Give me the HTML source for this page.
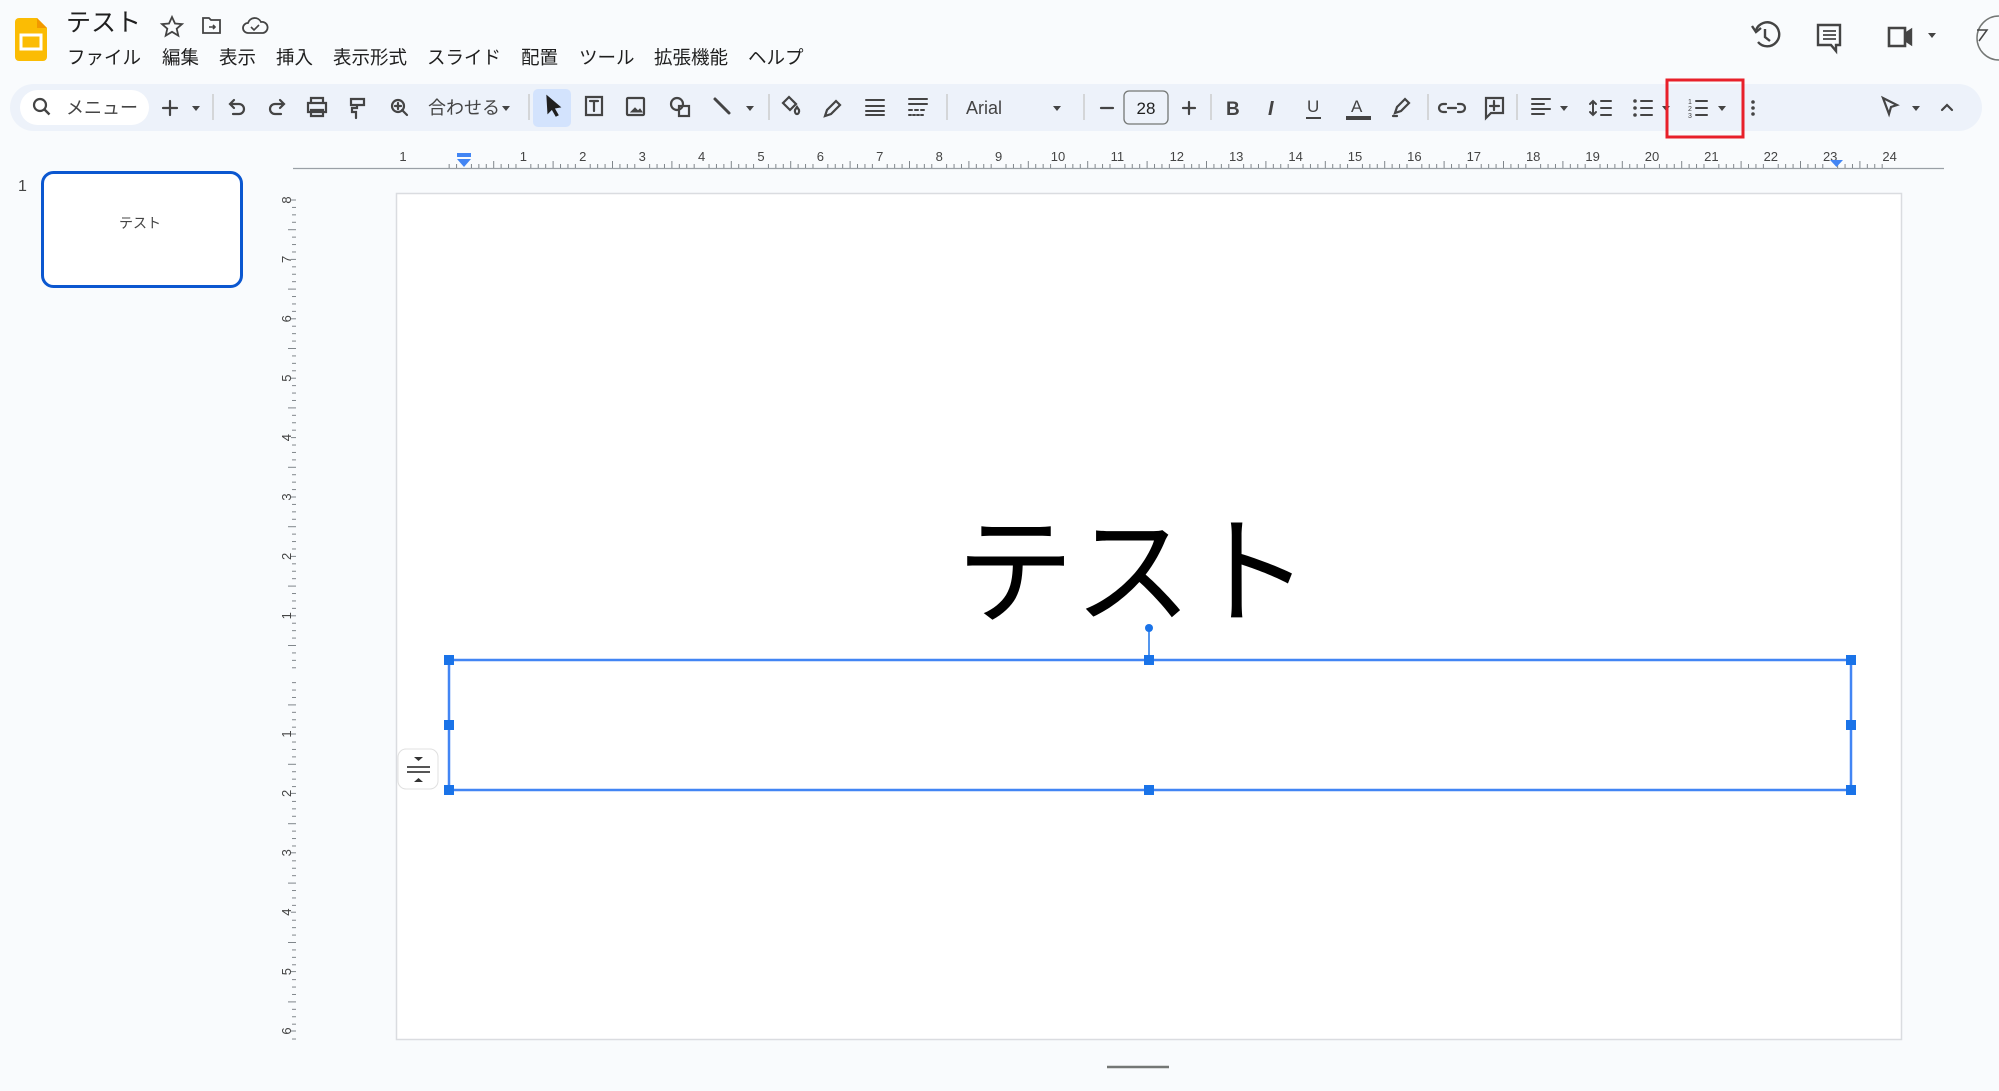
<!DOCTYPE html>
<html><head><meta charset="utf-8"><style>
html,body{margin:0;padding:0;width:1999px;height:1091px;overflow:hidden;background:#f9fbfd;}
svg{display:block;}
text{font-family:"Liberation Sans","Noto Sans CJK JP",sans-serif;}
.jp{font-family:"Liberation Sans","Noto Sans CJK JP",sans-serif;}
</style></head><body>
<svg id="s" width="1999" height="1091" viewBox="0 0 1999 1091" xmlns="http://www.w3.org/2000/svg">
<rect width="1999" height="1091" fill="#f9fbfd"/>
<!-- logo -->
<path d="M15 22 a4 4 0 0 1 4-4 h18 l10 10 v29 a4 4 0 0 1 -4 4 h-24 a4 4 0 0 1 -4-4z" fill="#fbbc04"/>
<path d="M37 18 v10 h10z" fill="#f29900"/>
<rect x="21" y="35" width="20" height="14" fill="none" stroke="#fff" stroke-width="3"/>
<text x="66" y="31" font-size="25" fill="#1f1f1f" class="jp">テスト</text>
<!-- star folder cloud -->
<path d="M172 17 l3 6.5 7 .6 -5.3 4.6 1.6 6.9 -6.3-3.8 -6.3 3.8 1.6-6.9 -5.3-4.6 7-.6z" fill="none" stroke="#444" stroke-width="1.8"/>
<path d="M203 18 h6 l2 2 h9 v13 h-17z" fill="none" stroke="#444" stroke-width="1.8"/><path d="M209 27 h6 m-2-2 l2 2 -2 2" stroke="#444" stroke-width="1.6" fill="none"/>
<path d="M248 33 a5 5 0 0 1 0-10 a7 7 0 0 1 13-1 a5 5 0 0 1 2 11z" fill="none" stroke="#444" stroke-width="1.8"/><path d="M251 27 l3 3 5-5" stroke="#444" stroke-width="1.6" fill="none"/>
<g font-size="18.5" fill="#1f1f1f" class="jp">
<text x="67" y="64">ファイル</text><text x="162" y="64">編集</text><text x="219" y="64">表示</text><text x="276" y="64">挿入</text><text x="333" y="64">表示形式</text><text x="427" y="64">スライド</text><text x="521" y="64">配置</text><text x="579" y="64">ツール</text><text x="654" y="64">拡張機能</text><text x="748" y="64">ヘルプ</text>
</g>
<!-- right icons -->
<g stroke="#444" stroke-width="2.4" fill="none">
<path d="M1756 30 a12 12 0 1 1 2 12"/><path d="M1752 26 l4 6 5-4"/><path d="M1765 29 v8 l5 4"/>
<path d="M1818 25 h22 v20 h-4 v6 l-5-6 h-13z"/><path d="M1823 31 h13 M1823 35 h13 M1823 39 h13" stroke-width="1.8"/>
<path d="M1889 28 h16 v18 h-16z" stroke-width="2.6"/><path d="M1905 34 l6-4 v14 l-6-4" fill="#444"/>
</g>
<path d="M1928 33 h8 l-4 5z" fill="#444"/>
<path d="M1999 16 a22 22 0 0 0 0 44" fill="none" stroke="#747775" stroke-width="1.5"/>
<path d="M1977 30 h10 l-8 11" stroke="#444" stroke-width="1.5" fill="none"/>
<!-- toolbar -->
<rect x="10" y="84" width="1972" height="47" rx="23.5" fill="#edf2fa"/>
<rect x="20" y="90" width="129" height="35" rx="17.5" fill="#fff"/>
<circle cx="40" cy="105" r="6" fill="none" stroke="#444" stroke-width="2.2"/><path d="M44.5 109.5 l5 5" stroke="#444" stroke-width="2.4"/>
<text x="66" y="114" font-size="18" fill="#444" class="jp">メニュー</text>
<rect x="533" y="89" width="38" height="38" rx="5" fill="#d3e3fd"/>
<g fill="#444" stroke="none">
<path d="M192 106 h8 l-4 5z M1053 106 h8 l-4 5z M746 106 h8 l-4 5z M502 106 h8 l-4 5z M1560 106 h8 l-4 5z M1662 106 h8 l-4 5z M1718 106 h8 l-4 5z M1912 106 h8 l-4 5z"/>
<circle cx="1753" cy="102" r="1.8"/><circle cx="1753" cy="108" r="1.8"/><circle cx="1753" cy="114" r="1.8"/>
</g>
<g stroke="#444" stroke-width="2.2" fill="none" stroke-linecap="round">
<path d="M163 108 h14 M170 101 v14"/>
<path d="M231 104 h8 a5 5 0 0 1 0 10 h-6 M234 100 l-4 4 4 4"/>
<path d="M283 104 h-8 a5 5 0 0 0 0 10 h6 M280 100 l4 4-4 4"/>
<path d="M311 102 v-4 h12 v4 M308 103 h18 v9 h-18z M311 110 h12 v6 h-12z"/>
<path d="M351 99 h13 v6 h-13z M357 105 v3 h-5 v4 h4 v6"/>
<circle cx="398" cy="106" r="6"/><path d="M402 110 l5 5 M398 103 v6 M395 106 h6"/>
<path d="M547 96 l13 11 -6 1 4 7 -2 1 -4-7 -4 4z" fill="#1f1f1f" stroke="#1f1f1f" stroke-width="1.2"/>
<path d="M586 97 h16 v18 h-16z"/><path d="M590 101 h8 M594 101 v10"/>
<rect x="627" y="98" width="17" height="17" rx="1"/><path d="M631 112 l4-4 3 3 2-2 2 3z" fill="#444" stroke-width="1"/>
<circle cx="677" cy="104" r="6"/><rect x="679" y="106" width="10" height="10"/>
<path d="M715 99 l14 14" stroke-width="3"/>
<path d="M783 103 l6-6 7 7 -6 6z M795 110 a2 3 0 0 0 2 4 a2 3 0 0 0 2-4 l-2-3z"/>
<path d="M825 116 l2-6 9-9 4 4 -9 9z"/>
<path d="M866 100 h18 M866 106 h18 M866 111 h18 M866 115 h18" stroke-width="2"/>
<path d="M909 99 h18 M909 104 h18 M909 110 h3 M915 110 h3 M921 110 h3 M909 115 h2 M913 115 h2 M917 115 h2 M921 115 h2" stroke-width="2"/>
<path d="M1101 108 h12 M1183 108 h12 M1189 102 v12"/>
</g>
<g font-size="18" fill="#444"><text x="428" y="114" class="jp">合わせる</text><text x="966" y="114">Arial</text></g>
<g stroke="#c7c7c7" stroke-width="1.3"><path d="M213 94 v26 M529 94 v26 M769 94 v26 M947 94 v26 M1084 94 v26 M1211 94 v26 M1428 94 v26 M1517 94 v26"/></g>
<rect x="1124" y="91" width="44" height="33" rx="5" fill="none" stroke="#747775" stroke-width="1.3"/>
<text x="1146" y="114" font-size="17" fill="#1f1f1f" text-anchor="middle">28</text>
<g fill="#444" font-size="19" font-weight="bold"><text x="1226" y="115">B</text></g>
<text x="1268" y="115" font-size="20" font-style="italic" font-family="Liberation Serif" fill="#444" font-weight="bold">I</text>
<text x="1307" y="112" font-size="17" fill="#444">U</text><path d="M1306 118 h15" stroke="#444" stroke-width="2"/>
<text x="1351" y="112" font-size="17" fill="#444">A</text><rect x="1346" y="116" width="25" height="4" fill="#444"/>
<g stroke="#444" stroke-width="2.2" fill="none" stroke-linecap="round">
<path d="M1395 113 l2-6 8-8 4 4 -8 8z M1393 116 h4"/>
<path d="M1446 104 h-3 a4 4 0 0 0 0 8 h3 M1458 104 h3 a4 4 0 0 1 0 8 h-3 M1448 108 h8"/>
<path d="M1486 98 h17 v15 h-12 l-5 5z M1494 101 v9 M1490 106 h9"/>
<path d="M1532 99 h18 M1532 104 h12 M1532 109 h18 M1532 114 h12" stroke-width="2"/>
<path d="M1593 101 v14 M1590 104 l3-3 3 3 M1590 112 l3 3 3-3 M1601 101 h10 M1601 108 h10 M1601 115 h10" stroke-width="2"/>
<path d="M1641 101 h11 M1641 108 h11 M1641 115 h11" stroke-width="2"/>
<path d="M1696 101 h11 M1696 108 h11 M1696 115 h11" stroke-width="2"/>
<path d="M1883 98 l14 7 -6 2 -2 7z"/>
<path d="M1942 110 l5-5 5 5"/>
</g>
<g fill="#444"><circle cx="1635" cy="101" r="1.8"/><circle cx="1635" cy="108" r="1.8"/><circle cx="1635" cy="115" r="1.8"/></g>
<text x="1688" y="104" font-size="7" fill="#444">1</text><text x="1688" y="111" font-size="7" fill="#444">2</text><text x="1688" y="118" font-size="7" fill="#444">3</text>
<rect x="1667" y="80" width="76" height="57" fill="none" stroke="#e8202a" stroke-width="3"/>
<!-- horizontal ruler -->
<path d="M293 168.5 H1944" stroke="#9aa0a6" stroke-width="1.2"/>
<g id="hr" stroke="#80868b" stroke-width="1"></g>
<g id="hrt" font-size="13" fill="#444" text-anchor="middle"></g>
<path d="M457 153 h14 v4 h-14z" fill="#4285f4"/><path d="M457 159 h14 l-7 8z" fill="#4285f4"/>
<path d="M1830 160 h13 l-6.5 7z" fill="#4285f4"/>
<!-- vertical ruler -->
<g id="vr" stroke="#80868b" stroke-width="1"></g>
<g id="vrt" font-size="13" fill="#444" text-anchor="middle"></g>
<!-- thumbnail -->
<text x="18" y="191" font-size="16" fill="#444">1</text>
<rect x="42.5" y="172.5" width="199" height="114" rx="11" fill="#fff" stroke="#0b57d0" stroke-width="3"/>
<text x="140" y="228" font-size="14" fill="#444" text-anchor="middle" class="jp">テスト</text>
<!-- slide -->
<rect x="396.5" y="193.5" width="1505" height="846" fill="#fff" stroke="#dadce0" stroke-width="1.5"/>
<text x="1133" y="614" font-size="118" fill="#000" text-anchor="middle" class="jp">テスト</text>
<rect x="449" y="660" width="1402" height="130" fill="none" stroke="#4285f4" stroke-width="2.5"/>
<path d="M1149 628 v32" stroke="#1a73e8" stroke-width="1.5"/><circle cx="1149" cy="628" r="4" fill="#1a73e8"/>
<g fill="#1a73e8">
<rect x="444" y="655" width="10" height="10"/><rect x="1144" y="655" width="10" height="10"/><rect x="1846" y="655" width="10" height="10"/>
<rect x="444" y="720" width="10" height="10"/><rect x="1846" y="720" width="10" height="10"/>
<rect x="444" y="785" width="10" height="10"/><rect x="1144" y="785" width="10" height="10"/><rect x="1846" y="785" width="10" height="10"/>
</g>
<rect x="398" y="749" width="40" height="40" rx="8" fill="#fff" stroke="#e0e0e0" stroke-width="1"/>
<path d="M407 767 h23 M407 772 h23" stroke="#555" stroke-width="2"/>
<path d="M414 757 h9 l-4.5 4z M414 782 h9 l-4.5-4z" fill="#333"/>
<path d="M1107 1067 h62" stroke="#747775" stroke-width="2.5"/>
</svg>
<script>
var NS="http://www.w3.org/2000/svg";
function el(p,t,a,txt){var e=document.createElementNS(NS,t);for(var k in a)e.setAttribute(k,a[k]);if(txt!=null)e.textContent=txt;document.getElementById(p).appendChild(e);}
var step=59.4,x0=464;
for(var i=-2;i<=24*8;i++){var x=x0+i*step/8;if(x<395||x>1895)continue;var m=((i%8)+8)%8;var h=m==0?0:(m==4?7:4);if(h)el("hr","line",{x1:x,x2:x,y1:168,y2:168-h});}
el("hrt","text",{x:403,y:161},"1");
for(var n=1;n<=24;n++){el("hrt","text",{x:x0+n*step,y:161},String(n));}
var y0=200+8*step; // zero at ~675? use label positions
// labels: 8 at y=200 going down to 1 at 616, then 1 at 734 ... 6 at 1031
var ys={};for(var n=8;n>=1;n--){ys["a"+n]=200+(8-n)*step;}
for(var i=0;i<=15*8;i++){var y=200+i*step/8-step/8*0;if(y>1040)break;var m=i%8;var h=m==0?0:(m==4?8:4);if(h)el("vr","line",{x1:296,x2:296-h,y1:y,y2:y});}
for(var n=8;n>=1;n--){var y=200+(8-n)*step;el("vrt","text",{x:0,y:0,transform:"translate(287,"+y+") rotate(-90) translate(0,4)"},String(n));el("vr","line",{x1:291,x2:296,y1:y,y2:y});}
for(var n=1;n<=6;n++){var y=616+step+ (n-1)*step+ (734-616-step);el("vrt","text",{x:0,y:0,transform:"translate(287,"+y+") rotate(-90) translate(0,4)"},String(n));el("vr","line",{x1:291,x2:296,y1:y,y2:y});}
</script>
</body></html>
